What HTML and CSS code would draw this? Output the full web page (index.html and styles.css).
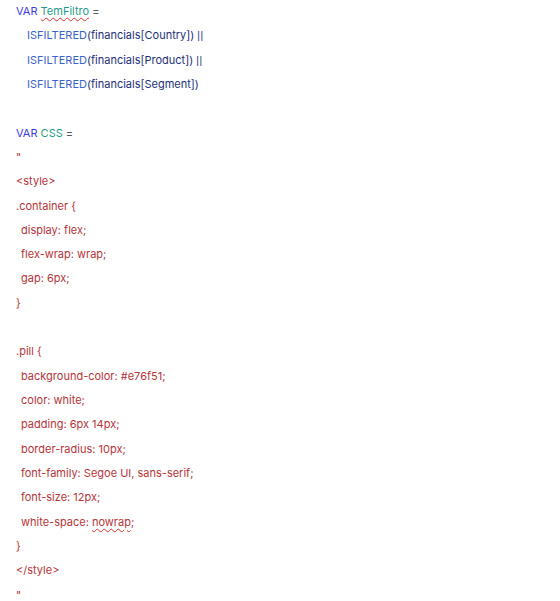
FILE: index.html
```html
<!DOCTYPE html>
<html>
<head>
<meta charset="utf-8">
<link rel="stylesheet" href="styles.css">
</head>
<body>
<div class="code">
  <div class="line"><span class="kw">VAR</span> <span class="var squiggle">TemFiltro</span> <span class="op">=</span></div>
  <div class="line ind2"><span class="fn">ISFILTERED</span><span class="id">(financials[Country]) <span class="pipe">||</span></span></div>
  <div class="line ind2"><span class="fn">ISFILTERED</span><span class="id">(financials[Product]) <span class="pipe">||</span></span></div>
  <div class="line ind2"><span class="fn">ISFILTERED</span><span class="id">(financials[Segment])</span></div>
  <div class="line"></div>
  <div class="line"><span class="kw">VAR</span> <span class="var">CSS</span> <span class="op">=</span></div>
  <div class="line str">"</div>
  <div class="line str">&lt;style&gt;</div>
  <div class="line str">.container {</div>
  <div class="line str ind1">display: flex;</div>
  <div class="line str ind1">flex-wrap: wrap;</div>
  <div class="line str ind1">gap: 6px;</div>
  <div class="line str">}</div>
  <div class="line"></div>
  <div class="line str">.pill {</div>
  <div class="line str ind1">background-color: #e76f51;</div>
  <div class="line str ind1">color: white;</div>
  <div class="line str ind1">padding: 6px 14px;</div>
  <div class="line str ind1">border-radius: 10px;</div>
  <div class="line str ind1">font-family: Segoe UI, sans-serif;</div>
  <div class="line str ind1">font-size: 12px;</div>
  <div class="line str ind1">white-space: <span class="squiggle">nowrap</span>;</div>
  <div class="line str">}</div>
  <div class="line str">&lt;/style&gt;</div>
  <div class="line str">"</div>
</div>
</body>
</html>
```

FILE: styles.css
```css
html, body {
  margin: 0;
  padding: 0;
  background: #ffffff;
}
.code {
  padding: 0 0 0 16px;
  font-family: "Inter", "Noto Sans", sans-serif;
  font-size: 11px;
  font-variant-ligatures: none;
  font-feature-settings: "calt" 0, "liga" 0;
}
.line {
  height: 24.32px;
  line-height: 23px;
  white-space: pre;
}
.ind1 { padding-left: 5px; }
.ind2 { padding-left: 11px; }
.kw { color: #3c3ce0; }
.var { color: #1f9a8c; }
.op { color: #555555; }
.fn { color: #3a63c9; }
.id { color: #1c2f78; }
.pipe {
  font-family: "Liberation Sans", sans-serif;
  font-size: 10px;
  letter-spacing: 0.5px;
}
.str { color: #b5343a; }
.squiggle {
  text-decoration: underline wavy #e03030;
  text-decoration-thickness: 1px;
  text-underline-offset: 2px;
}
```
